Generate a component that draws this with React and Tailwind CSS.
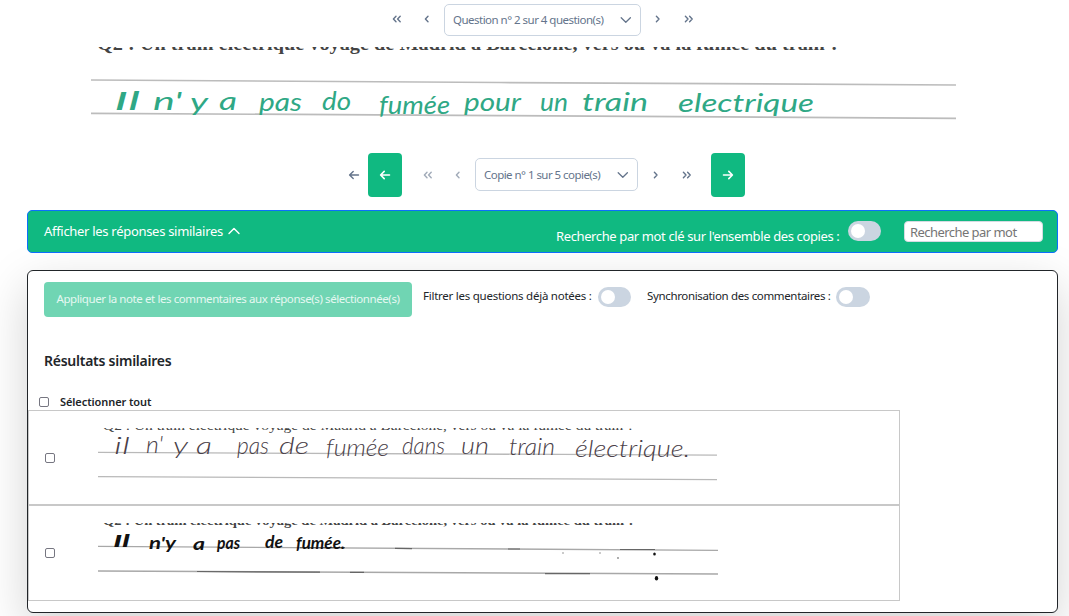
const UI = "font-['Noto_Sans',sans-serif]";

function Icon({ d, className = "", size = 14, w = 1.4 }) {
  return (
    <svg width={size} height={size} viewBox="0 0 14 14" fill="none" stroke="currentColor" strokeWidth={w} strokeLinecap="round" strokeLinejoin="round" className={"shrink-0 " + className}>
      <path d={d} />
    </svg>
  );
}

const LEFT = "M8 4.3 L5.4 7 L8 9.7";
const RIGHT = "M6.4 4.3 L9 7 L6.4 9.7";
const DLEFT = "M6 4.3 L3.4 7 L6 9.7 M10.2 4.3 L7.6 7 L10.2 9.7";
const DRIGHT = "M4.4 4.3 L7 7 L4.4 9.7 M8.6 4.3 L11.2 7 L8.6 9.7";
const DOWN = "M2.2 4.8 L6.8 9.2 L11.4 4.8";
const UP = "M2 9.6 L7 4.4 L12 9.6";
const ARROW_L = "M11.5 7 H2.7 M6.2 3.4 L2.6 7 L6.2 10.6";
const ARROW_R = "M2.5 7 H11.3 M7.8 3.4 L11.4 7 L7.8 10.6";

function NavButton({ d, className = "" }) {
  return (
    <button className={"flex h-6 w-6 shrink-0 items-center justify-center " + className}>
      <Icon d={d} />
    </button>
  );
}

function Select({ label, className }) {
  return (
    <div className={"flex shrink-0 items-center justify-between rounded-[5px] border border-[#cbd5e1] bg-white pr-[7px] pl-2 text-[#64748b] " + className}>
      <span className="whitespace-nowrap">{label}</span>
      <Icon d={DOWN} w={1.3} />
    </div>
  );
}

function Toggle({ className = "" }) {
  return (
    <span className={"flex h-5 w-[33px] shrink-0 items-center rounded-full bg-[#cbd5e1] pl-[3px] " + className}>
      <span className="h-[14px] w-[14px] rounded-full bg-white" />
    </span>
  );
}

function Checkbox({ className = "" }) {
  return <span className={"h-[10px] w-[10px] shrink-0 rounded-[2px] border border-[#767681] bg-white " + className} />;
}

function Words({ words, size, fill, weight = 400 }) {
  return words.map(([t, x, y, len], i) => (
    <text key={i} x={x} y={y} textLength={len} lengthAdjust="spacingAndGlyphs" fontFamily="Lato, sans-serif" fontStyle="italic" fontWeight={weight} fontSize={size} fill={fill}>
      {t}
    </text>
  ));
}

function Printed({ x, y, len, size, weight = 400 }) {
  return (
    <text x={x} y={y} textLength={len} lengthAdjust="spacingAndGlyphs" fontFamily="'Liberation Serif', serif" fontSize={size} fontWeight={weight} fill="#444">
      Q2 : Un train électrique voyage de Madrid à Barcelone, vers où va la fumée du train ?
    </text>
  );
}

function MainScan() {
  return (
    <svg width="880" height="90" viewBox="85 47 880 90" className="ml-[85px] block overflow-hidden">
      <Printed x={97} y={49.8} len={743} size={19} weight={700} />
      <path d="M91 80 L500 82.5 L956 85 M91 113.3 L500 115.6 L956 118.3" stroke="#bcbcbc" strokeWidth="1.7" fill="none" />
      <Words
        size={25}
        fill="#2fa885"
        words={[
          ["Il", 114, 110, 26], ["n'", 153, 110, 29], ["y", 190, 111, 18], ["a", 219, 110, 18],
          ["pas", 259, 111, 43], ["do", 322, 110, 29], ["fumée", 379, 114, 71], ["pour", 464, 111, 57],
          ["un", 540, 111, 28], ["train", 582, 111, 66], ["electrique", 678, 112, 136],
        ]}
      />
    </svg>
  );
}

function ScanOne() {
  return (
    <svg width="640" height="60" viewBox="90 428 640 60" className="block overflow-hidden">
      <Printed x={103} y={430} len={531} size={13.5} />
      <path d="M98 452.3 L717 455.2 M98 476.6 L717 479.6" stroke="#b9b9b9" strokeWidth="1.3" fill="none" />
      <Words
        size={24}
        weight={300}
        fill="#4a4048"
        words={[
          ["il", 114, 454, 16], ["n'", 146, 453, 17], ["y", 173, 454, 15], ["a", 196, 454, 16],
          ["pas", 237, 454, 32], ["de", 279, 454, 30], ["fumée", 326, 456, 63], ["dans", 402, 454, 43],
          ["un", 461, 454, 28], ["train", 509, 455, 46], ["électrique.", 575, 457, 115],
        ]}
      />
    </svg>
  );
}

function ScanTwo() {
  return (
    <svg width="640" height="60" viewBox="90 523 640 60" className="block overflow-hidden">
      <Printed x={103} y={524.9} len={532} size={13.5} weight={700} />
      <path d="M98 546.4 L718 550.3 M98 571 L718 574" stroke="#a8a8a8" strokeWidth="1.3" fill="none" />
      <path d="M300 547.6 H345 M395 548.3 L412 548.6 M508 549 H520 M620 549.5 H655 M197 571.5 L320 572.2 M350 572.4 H364 M545 573.6 H590" stroke="#666" strokeWidth="1.2" fill="none" />
      <g fill="#111">
        <ellipse cx="654.5" cy="554" rx="1.3" ry="1.6" />
        <ellipse cx="656.5" cy="578.3" rx="1.7" ry="2.2" />
        <circle cx="563" cy="553" r="0.8" fill="#888" />
        <circle cx="600" cy="553" r="0.8" fill="#888" />
        <circle cx="618" cy="558" r="0.9" fill="#888" />
      </g>
      <Words
        size={17}
        fill="#111"
        weight={700}
        words={[
          ["Il", 113, 547, 17], ["n'y", 149, 549, 27], ["a", 193, 550, 12], ["pas", 217, 549, 23],
          ["de", 265, 548, 18], ["fumée.", 296, 549, 49],
        ]}
      />
    </svg>
  );
}

function ResultRow({ children, className = "" }) {
  return (
    <div className={"flex border border-[#c8c8c8] " + className}>
      <Checkbox className="mt-[42px] ml-4" />
      <div className="mt-[17px] ml-[35px]">{children}</div>
    </div>
  );
}

export default function App() {
  return (
    <div className={"flex h-[616px] w-[1069px] flex-col overflow-hidden bg-white text-[#212529] " + UI}>
      <div className="flex h-[47px] shrink-0 items-start pt-1 pl-[385px] text-[#64748b]">
        <NavButton d={DLEFT} className="mt-[3px]" />
        <NavButton d={LEFT} className="mt-[3px] ml-1.5" />
        <Select label="Question n° 2 sur 4 question(s)" className="ml-[5px] h-8 w-[197px] text-[11.5px] tracking-[-0.52px]" />
        <NavButton d={RIGHT} className="mt-[3px] ml-1" />
        <NavButton d={DRIGHT} className="mt-[3px] ml-[7px]" />
      </div>

      <div className="h-[106px] shrink-0">
        <MainScan />
      </div>

      <div className="flex h-11 shrink-0 items-center pl-[342px] text-[#64748b]">
        <NavButton d={ARROW_L} />
        <button className="ml-0.5 flex h-11 w-[34px] items-center justify-center rounded-[4px] bg-[#10b981] text-white">
          <Icon d={ARROW_L} w={1.6} />
        </button>
        <NavButton d={DLEFT} className="ml-3.5 opacity-60" />
        <NavButton d={LEFT} className="ml-1.5 opacity-60" />
        <Select label="Copie n° 1 sur 5 copie(s)" className="mb-px ml-[5px] h-[33px] w-[163px] text-[11.5px] tracking-[-0.54px]" />
        <NavButton d={RIGHT} className="ml-[5px]" />
        <NavButton d={DRIGHT} className="ml-[7px]" />
        <button className="ml-[13px] flex h-11 w-[34px] items-center justify-center rounded-[4px] bg-[#10b981] text-white">
          <Icon d={ARROW_R} w={1.6} />
        </button>
      </div>

      <div className="relative z-10 mt-[13px] ml-[27px] flex h-[43px] w-[1031px] shrink-0 items-start rounded-[5px] border border-[#0d6efd] bg-[#10b981] pl-4 text-[13px] leading-5 text-white">
        <span className="mt-2.5 w-[180px] whitespace-nowrap tracking-[-0.3px]">Afficher les réponses similaires</span>
        <Icon d={UP} className="mt-[13px] ml-[3px]" w={1.4} />
        <span className="mt-[15px] ml-[315px] w-[284px] whitespace-nowrap tracking-[-0.38px]">Recherche par mot clé sur l'ensemble des copies :</span>
        <Toggle className="mt-2.5 ml-2" />
        <div className="mt-2.5 ml-[23px] flex h-[21px] w-[139px] shrink-0 items-center rounded-[4px] border border-[#d5dbe2] bg-white pl-[5px] whitespace-nowrap tracking-[-0.55px] text-[#757575]">
          Recherche par mot
        </div>
      </div>

      <div className="mt-[17px] ml-[27px] flex h-[343px] w-[1031px] shrink-0 flex-col rounded-[6px] border border-[#212529] bg-white shadow-[0_16px_48px_rgba(0,0,0,0.175)]">
        <div className="flex h-[70px] shrink-0 items-start pt-[11px] pl-4 text-[11.5px] leading-5">
          <button className="flex h-[35px] w-[368px] shrink-0 items-center justify-center rounded-[4px] bg-[#70d5b3] pb-0.5 whitespace-nowrap tracking-[-0.41px] text-[#e6f8f2]">
            Appliquer la note et les commentaires aux réponse(s) sélectionnée(s)
          </button>
          <span className="mt-1 ml-[11px] w-[170px] whitespace-nowrap tracking-[-0.25px]">Filtrer les questions déjà notées :</span>
          <Toggle className="mt-[5px] ml-[5px]" />
          <span className="mt-1 ml-4 w-[184px] whitespace-nowrap tracking-[-0.35px]">Synchronisation des commentaires :</span>
          <Toggle className="mt-[5px] ml-[5px] w-[34px]" />
        </div>
        <h2 className="mt-[10px] h-5 pl-4 text-[14px] leading-5 font-semibold tracking-[-0.25px]">Résultats similaires</h2>
        <div className="mt-[21px] flex h-[18px] items-center pl-[11px] text-[11px] font-semibold">
          <Checkbox className="mt-0.5" />
          <span className="mt-[3px] ml-[11px] tracking-[-0.08px]">Sélectionner tout</span>
        </div>
        <div className="w-[872px]">
          <ResultRow className="h-[95px]">
            <ScanOne />
          </ResultRow>
          <ResultRow className="h-24">
            <ScanTwo />
          </ResultRow>
        </div>
      </div>
    </div>
  );
}
